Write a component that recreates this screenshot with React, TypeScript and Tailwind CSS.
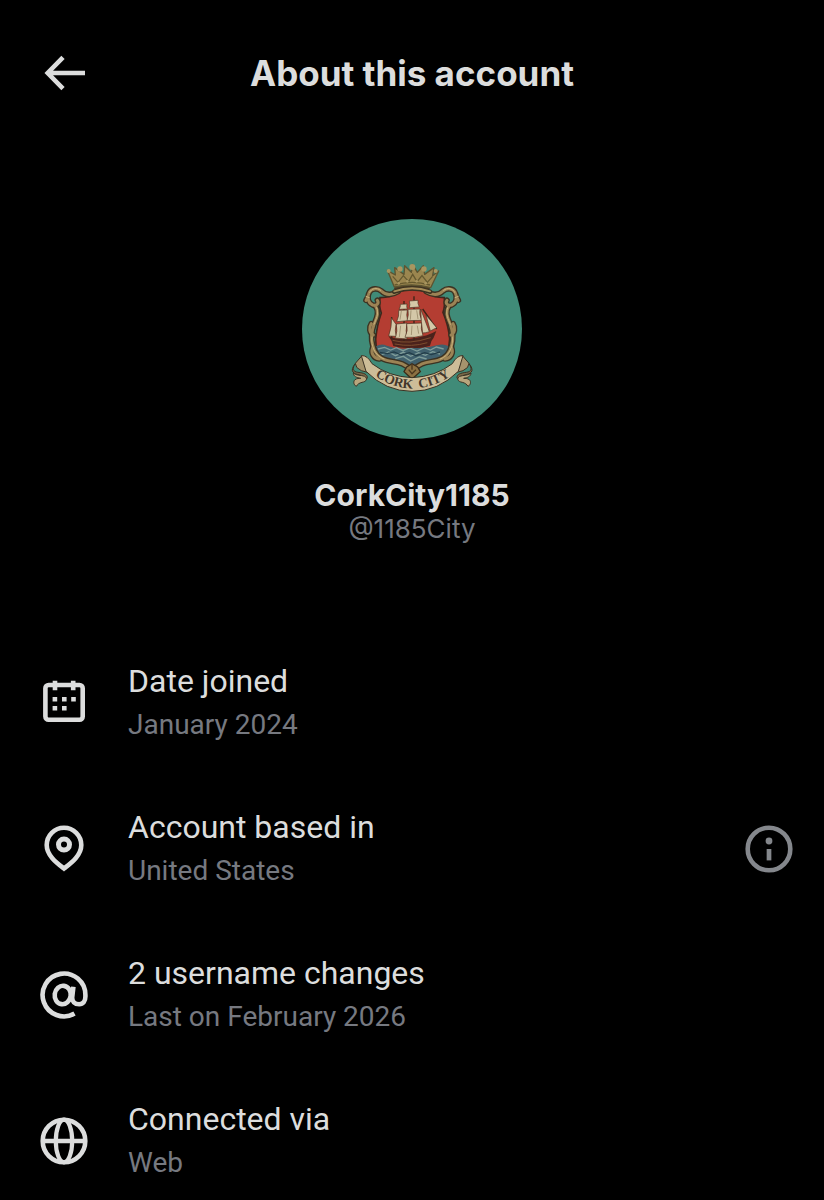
import type { ReactNode } from "react";

function Icon({ children }: { children: ReactNode }) {
  return (
    <svg
      viewBox="0 0 48 48"
      className="size-12 shrink-0"
      fill="none"
      stroke="currentColor"
      strokeWidth="4.6"
      aria-hidden="true"
    >
      {children}
    </svg>
  );
}

const BackIcon = () => (
  <Icon>
    <path d="M23 8.400 7.700 24 23 39.600M7.700 24H45" />
  </Icon>
);

const CalendarIcon = () => (
  <Icon>
    <rect x="5.400" y="6" width="37.300" height="34.800" rx="3.200" />
    <path d="M15 1.800v9.400M33.200 1.800v9.400" />
    <path
      d="M12.600 18h4.600v4.500h-4.600zM22 18h4.600v4.500H22zM31.200 18h4.600v4.500h-4.600zM12.600 27h4.600v4.500h-4.600zM22 27h4.600v4.500H22z"
      fill="currentColor"
      stroke="none"
    />
  </Icon>
);

const PinIcon = () => (
  <Icon>
    <path d="M24 43.500C18 38.800 6.700 31 6.700 20a17.300 17.300 0 0 1 34.600 0C41.300 31 30 38.800 24 43.500z" />
    <circle cx="24" cy="19.600" r="5.500" strokeWidth="5" />
  </Icon>
);

const AtIcon = () => (
  <Icon>
    <path d="M34.500 42.600A21.400 21.400 0 1 1 45.400 24v1.500c0 4.800-2.200 7.700-6.200 7.700-4.600 0-7.300-2.600-7-7l1.200-10.400" />
    <ellipse cx="22.700" cy="24" rx="8" ry="9.200" transform="rotate(8 22.700 24)" />
  </Icon>
);

const GlobeIcon = () => (
  <Icon>
    <circle cx="24" cy="24" r="21.300" />
    <ellipse cx="24" cy="24" rx="8.200" ry="21.300" strokeWidth="4.200" />
    <path d="M3 24h42" strokeWidth="4.300" />
  </Icon>
);

const InfoIcon = () => (
  <Icon>
    <circle cx="24" cy="24" r="21.300" />
    <circle cx="24" cy="16" r="3.400" fill="currentColor" stroke="none" />
    <path d="M24 24v11.400" strokeWidth="4.700" />
  </Icon>
);

function FrameSide() {
  return (
    <g fill="none" strokeLinecap="round" strokeLinejoin="round">
      <g stroke="#3b3222" strokeWidth="17">
        <path d="M318 248c-20 12-38 10-50-2-12-10-30-8-36 4-8 14-4 32 10 38 12 4 20-6 14-14" />
        <path d="M250 290c14 22 2 40-4 56-6 18-10 44-4 62 4 22 20 40 42 46 24 6 54 4 72 30" />
        <path d="M244 378c-12-6-14-22-6-34M262 450c-18-2-26-18-20-34M226 266l-4 8" />
      </g>
      <g stroke="#9c8354" strokeWidth="9">
        <path d="M318 248c-20 12-38 10-50-2-12-10-30-8-36 4-8 14-4 32 10 38 12 4 20-6 14-14" />
        <path d="M250 290c14 22 2 40-4 56-6 18-10 44-4 62 4 22 20 40 42 46 24 6 54 4 72 30" />
        <path d="M244 378c-12-6-14-22-6-34M262 450c-18-2-26-18-20-34M226 266l-4 8" />
      </g>
      <g stroke="#c9b17b" strokeWidth="3">
        <path d="M266 244c-12-10-28-6-33 6M254 296c8 18-2 34-8 50M240 384c-4 26 8 56 36 66M222 262l10 4" />
      </g>
    </g>
  );
}

function RibbonTail() {
  return (
    <g stroke="#3a3223" strokeWidth="3" strokeLinejoin="round">
      <path d="M210 440 190 463q0 14 18 22l30 8-8-28z" fill="#a6946d" />
      <path d="M190 464c-10 14-8 24 8 26 18 2 28 6 28 16-4 10-16 10-24 8 2-8 10-10 16-8-10-12-34-6-37-22 0-8 4-14 9-20z" fill="#7b6b49" />
      <path d="M184 492c6 8 24 6 34 10 10 6 6 16-8 18-8 2-14 6-17 12-8-4-10-14-4-20 6-4 12-4 17-4-12-2-22-6-22-16z" fill="#b8a67d" />
    </g>
  );
}

function Crest() {
  return (
    <svg viewBox="30 30 660 660" className="size-[220px] rounded-full bg-[#408b78]" role="img" aria-label="Cork City crest">
      <filter id="painted">
        <feGaussianBlur stdDeviation="2.200" />
      </filter>
      <g filter="url(#painted)">
        <ellipse cx="360" cy="238" rx="54" ry="10" fill="#4b3a22" />
        <path
          d="M307 234 286 184l24 14-2-22 28 20 2-26 20 20 4-24 14 24 18-20 4 26 28-20-4 24 18-14-24 50q-54-15-107-2z"
          fill="#9b8650"
          stroke="#5d5430"
          strokeWidth="4"
          strokeLinejoin="round"
        />
        <path
          d="m302 202 16 18 16-20 16 18 12-22 13 22 15-18 16 20 16-18M308 228q52-16 106 0"
          fill="none"
          stroke="#65592f"
          strokeWidth="4"
        />
        <g fill="#a99660">
          <circle cx="290" cy="186" r="6" />
          <circle cx="324" cy="180" r="8" />
          <circle cx="361" cy="174" r="9" />
          <circle cx="396" cy="180" r="8" />
          <circle cx="431" cy="186" r="6" />
          <circle cx="320" cy="223" r="4" />
          <circle cx="346" cy="217" r="4" />
          <circle cx="374" cy="217" r="4" />
          <circle cx="401" cy="223" r="4" />
        </g>

        <path
          d="M264 266q34 0 52-17 44-14 90 0 18 17 51 17 2 30-4 44 17 40 20 80-1 44-30 60-54 3-82 28-30-27-83-28-28-18-27-60 4-42 17-78-8-20-4-46z"
          fill="#b43e30"
          stroke="#41251b"
          strokeWidth="5"
        />
        <path d="M252 412q16-10 32-2 38 14 76 6 38 4 74-7 20-6 35 2-2 26-26 38-58 4-82 25-30-25-81-25-22-14-28-37z" fill="#3f616d" />
        <path
          d="m258 420 20-5 18 8 17-7 20 9 20-8 22 9 22-10 18 7 18-9 22 6M268 438l22-9 20 11 24-10 22 12 24-11 20 8 22-11 22 7M310 449l24-7 22 14 26-12 22 6"
          fill="none"
          stroke="#7f9c99"
          strokeWidth="4"
        />
        <path
          d="m264 430 22 4 20-5 22 9 24-7 20 9 26-9 20 6 26-8"
          fill="none"
          stroke="#243e4a"
          strokeWidth="4"
        />

        <path d="M290 382q30 13 84 4 32-5 59-20l-8 20q-8 8-11 24-26 10-53 6-30 4-57-5-4-16-14-29z" fill="#4b241b" />
        <path d="M302 394q48 14 114-8M308 405q52 10 98-4" fill="none" stroke="#7d4c30" strokeWidth="3" />
        <path d="M336 276v120M366 262v130M299 324v64M392 300l42 60" stroke="#3d2219" strokeWidth="4" />
        <g fill="#d4c8a8" stroke="#4b3223" strokeWidth="2" strokeLinejoin="round">
          <path d="m352 276 26-2q-2 8 4 20l-30 2q3-8 0-20z" />
          <path d="m325 286 20-1q-2 8 1 15l-25 1q5-8 4-15z" />
          <path d="m320 304 26-1q-4 16 1 32l-33 3q8-16 6-34z" />
          <path d="m348 301 36-1q-3 16 5 34l-44 1q6-16 3-34z" />
          <path d="m313 345 32-3q-5 22 0 48l-36-3q9-20 4-42z" />
          <path d="m344 344 45-2q-4 16 4 38-24 7-54 5 10-20 5-41z" />
          <path d="m298 326 14 20q-4 18 0 36l-22-1q10-28 8-55z" />
          <path d="m386 300 26 68q-12 4-20 4-5-34-6-72z" />
          <path d="m402 318 32 38-19 10z" />
        </g>
        <path d="m328 306-4 26M357 304l-2 28M374 304l4 26M326 350l-4 34M360 350l-2 28M376 350l4 24" stroke="#a49575" strokeWidth="3" />

        <FrameSide />
        <g transform="translate(721 0) scale(-1 1)">
          <FrameSide />
        </g>
        <path d="M307 248q53-19 107 0" fill="none" stroke="#3b3222" strokeWidth="14" strokeLinecap="round" />
        <path d="M307 247q53-19 107 0" fill="none" stroke="#a58c58" strokeWidth="6" strokeLinecap="round" />
        <path d="m344 474 16-10 17 10 8 14-25 22-24-22z" fill="#8c7142" stroke="#3b2c1a" strokeWidth="4" />
        <path d="m350 482 10 12 12-12M360 466v16" fill="none" stroke="#4b381f" strokeWidth="4" />

        <RibbonTail />
        <g transform="translate(721 0) scale(-1 1)">
          <RibbonTail />
        </g>
        <path
          d="M208 440q18-2 32 24 50 39 120 42 70-3 121-42 14-26 32-24l-14 47q-60 60-139 60T222 487z"
          fill="#cdbd98"
          stroke="#3a3223"
          strokeWidth="3"
          strokeLinejoin="round"
        />
      </g>
      <path id="motto-curve" d="M222 482Q292 538 362 538T502 482" fill="none" />
      <text fill="#42362a" textAnchor="middle" className="font-['Liberation_Serif',serif] text-[40px] font-bold whitespace-pre">
        <textPath href="#motto-curve" startOffset="50%">
          {"CORK\u00a0\u00a0CITY"}
        </textPath>
      </text>
    </svg>
  );
}

type Detail = { icon: ReactNode; title: string; value: string; info?: boolean };

const details: Detail[] = [
  { icon: <CalendarIcon />, title: "Date joined", value: "January 2024" },
  { icon: <PinIcon />, title: "Account based in", value: "United States", info: true },
  { icon: <AtIcon />, title: "2 username changes", value: "Last on February 2026" },
  { icon: <GlobeIcon />, title: "Connected via", value: "Web" },
];

export default function App() {
  return (
    <main className="min-h-screen bg-black pt-[49px] font-[Inter,sans-serif] text-[#dcdddd]">
      <header className="grid grid-cols-[48px_1fr_48px] items-center px-10">
        <button type="button" aria-label="Back">
          <BackIcon />
        </button>
        <h1 className="text-center text-[35px] leading-12 font-bold">About this account</h1>
      </header>

      <section className="mt-[122px] flex flex-col items-center">
        <Crest />
        <h2 className="mt-9 text-[30px] leading-10 font-bold">CorkCity1185</h2>
        <p className="text-[26px] leading-7 text-[#767980]">@1185City</p>
      </section>

      <ul className="mt-[116px] flex flex-col gap-[59px] pr-[31px] pl-10 font-[Roboto,sans-serif]">
        {details.map((detail) => (
          <li key={detail.title} className="flex items-center gap-10">
            {detail.icon}
            <div className="flex-1">
              <h3 className="text-[32px] leading-11">{detail.title}</h3>
              <p className="text-[28px] leading-[43px] text-[#767980]">{detail.value}</p>
            </div>
            {detail.info && (
              <button type="button" aria-label="About account location" className="text-[#84878c]">
                <InfoIcon />
              </button>
            )}
          </li>
        ))}
      </ul>
    </main>
  );
}
